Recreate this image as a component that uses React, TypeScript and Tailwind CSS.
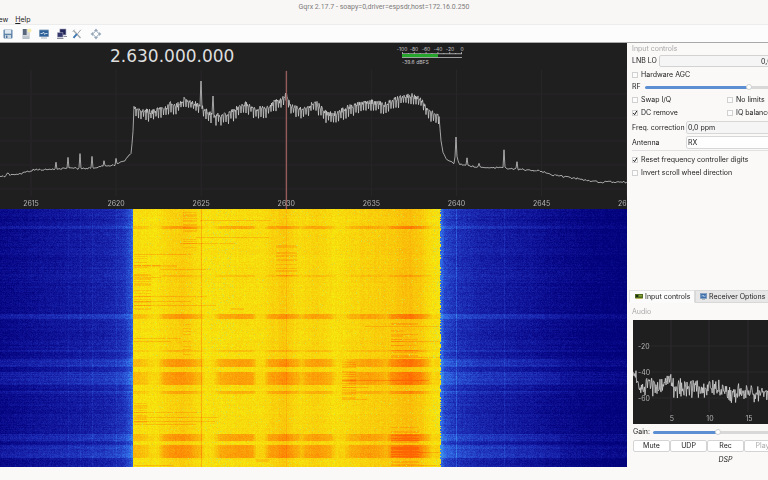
import React, { useEffect, useRef } from "react";

type Point = [number, number];

function makeRandom(seed: number) {
  let s = seed;
  return () => {
    s = (s * 1664525 + 1013904223) % 4294967296;
    return s / 4294967296;
  };
}

function interpolate(points: Point[], x: number) {
  if (x <= points[0][0]) return points[0][1];
  for (let i = 1; i < points.length; i++) {
    if (x <= points[i][0]) {
      const [x0, y0] = points[i - 1];
      const [x1, y1] = points[i];
      return y0 + ((y1 - y0) * (x - x0)) / (x1 - x0 || 1);
    }
  }
  return points[points.length - 1][1];
}

const PLOT_W = 627;
const PLOT_H = 139;
const BAND_START = 133;
const BAND_END = 440;

// Spectrum envelope, in plot units (0 is the top of the plot).
const NOISE_LEFT: Point[] = [
  [0, 107], [6, 106], [7, 103], [10, 105], [20, 104], [33, 100], [43, 99.5], [55, 99.5], [56, 93], [57, 99], [67, 98.5],
  [68, 87], [69, 98], [79, 98.5], [80, 84], [81, 98.5], [91, 98], [92, 87], [93, 98], [103, 96], [104, 91], [105, 96],
  [115, 95], [116, 88], [117, 94], [123, 92], [126, 89], [128, 86], [131, 83], [132, 74], [133, 62], [134, 36],
];
const IN_BAND: Point[] = [
  [134, 37], [142, 39], [152, 40], [160, 38], [165, 37], [171, 32], [177, 34], [184, 27], [190, 30], [198, 33], [200, 33],
  [201, 11], [202, 35], [205, 38], [209, 42], [212, 42], [213, 26], [214, 44], [223, 44], [231, 41], [238, 36], [246, 32],
  [252, 35], [256, 38], [260, 37], [265, 37], [272, 32], [280, 29], [285, 26], [286, 21], [287, 27], [290, 33], [302, 38],
  [316, 31], [327, 42], [336, 42], [347, 36], [358, 32], [372, 30], [384, 33], [395, 28], [405, 24], [413, 24], [422, 29],
  [429, 40], [435, 42], [439, 45],
];
const NOISE_RIGHT: Point[] = [
  [440, 58], [441, 70], [443, 83], [447, 90], [454, 93], [455, 87], [456, 67], [457, 87], [459, 94], [466, 95], [467, 88],
  [468, 96], [478, 97], [479, 94], [480, 97], [497, 98], [503, 98], [504, 80], [505, 98], [516, 99], [517, 92], [518, 99],
  [540, 101], [553, 105], [573, 108], [597, 112], [627, 112],
];

function spectrumPath() {
  const rnd = makeRandom(11);
  const parts: string[] = [];
  const add = (x: number, y: number) => parts.push(x.toFixed(1) + "," + y.toFixed(1));
  for (let x = 0; x <= 134; x += 1) add(x, interpolate(NOISE_LEFT, x) + (rnd() - 0.5) * 1.8);
  let tooth = 0;
  for (let x = 134.5; x < BAND_END - 0.5; x += 0.5) {
    const top = interpolate(IN_BAND, x);
    const deep = tooth % 5 === 3 ? 8 + rnd() * 5 : rnd() * 5;
    const isPeak = Math.abs(x - 201) < 1 || Math.abs(x - 213) < 1;
    add(x, top + (isPeak ? 0 : deep - 1));
    tooth++;
  }
  for (let x = 440; x <= PLOT_W; x += 1) add(x, interpolate(NOISE_RIGHT, x) + (rnd() - 0.5) * 1.9);
  return "M" + parts.join("L");
}

const SPECTRUM = spectrumPath();
const FREQ_TICKS = [2615, 2620, 2625, 2630, 2635, 2640, 2645, 2650];
const tickX = (f: number) => 31 + ((f - 2615) / 5) * 85.1;

function Spectrum() {
  return (
    <div className="relative h-[139px] shrink-0 overflow-hidden">
      <svg className="block h-full w-full" viewBox={`0 0 ${PLOT_W} ${PLOT_H}`} preserveAspectRatio="none" aria-hidden="true">
        {FREQ_TICKS.map((f) => (
          <line key={f} x1={tickX(f)} x2={tickX(f)} y1="0" y2="126" stroke="#282728" />
        ))}
        {[24, 48, 71, 95, 119].map((y) => (
          <line key={y} x1="0" x2={PLOT_W} y1={y} y2={y} stroke="#262526" />
        ))}
        <path d={SPECTRUM} fill="none" stroke="#d2d2d2" strokeWidth="0.75" strokeLinejoin="round" />
        <rect x="285.7" y="1" width="1.4" height="138" fill="#935b59" />
      </svg>
      {FREQ_TICKS.map((f) => (
        <span
          key={f}
          className="absolute bottom-0 w-8 -translate-x-1/2 text-center text-[7px] leading-[11px] text-[#b5b5b5]"
          style={{ left: `${(tickX(f) / PLOT_W) * 100}%` }}
        >
          {f}
        </span>
      ))}
    </div>
  );
}

const HEAT: Point[] = [
  [134, 0.5], [144, 0.4], [150, 0.15], [158, 0.15], [164, 0.7], [176, 0.85], [190, 0.75], [200, 0.45], [205, 0.08], [213, 0.1],
  [220, 0.7], [238, 0.85], [252, 0.8], [256, 0.12], [264, 0.15], [268, 0.65], [285, 0.85], [297, 0.6], [301, 0.35], [306, 0.65],
  [320, 0.75], [330, 0.6], [336, 0.15], [344, 0.15], [350, 0.5], [368, 0.7], [380, 0.5], [386, 0.3], [392, 0.85], [410, 1.1],
  [420, 0.9], [428, 0.5], [432, 0.15], [438, 0.25], [441, 0.1],
];
const GLOW: Point[] = [
  [134, 0.03], [155, 0], [168, 0.1], [182, 0.16], [196, 0.07], [206, 0], [230, 0.03], [250, 0.05], [262, 0.03], [284, 0.19],
  [298, 0.05], [318, 0.11], [334, 0.01], [350, 0.08], [372, 0.14], [390, 0.17], [410, 0.27], [422, 0.16], [428, 0.03], [441, 0],
];
// [first row, last row, strength] of the bursts that cross the whole band
const BURSTS: [number, number, number][] = [
  [17, 19, 0.7], [66, 67, 0.4], [105, 109, 0.75], [150, 157, 0.8], [163, 175, 0.8],
  [182, 184, 0.6], [225, 231, 0.8], [236, 248, 0.85], [141, 142, 0.35],
];
// [x0, x1, y0, y1, density] patches of short streaks
const PATCHES: [number, number, number, number, number][] = [
  [183, 196, 3, 42, 0.5], [276, 296, 36, 66, 0.5], [134, 146, 44, 60, 0.4], [134, 150, 65, 100, 0.4], [134, 176, 56, 57, 0.8],
  [342, 355, 152, 190, 0.55], [391, 417, 112, 148, 0.55], [391, 418, 217, 256, 0.45], [391, 402, 118, 136, 0.4],
  [134, 146, 193, 215, 0.5], [231, 243, 98, 102, 0.7], [256, 268, 249, 252, 0.6], [183, 190, 114, 148, 0.3],
];
// [x0, x1, y] long thin streaks
const STREAKS: [number, number, number][] = [
  [200, 270, 11], [196, 268, 28], [180, 235, 34], [134, 160, 68], [134, 206, 87], [134, 215, 96], [134, 190, 92], [134, 159, 56],
  [134, 180, 129], [134, 170, 132], [134, 200, 203], [134, 217, 208], [134, 216, 212], [134, 195, 215], [342, 367, 178],
  [342, 428, 171], [342, 366, 190], [365, 440, 117], [391, 440, 132], [391, 440, 148], [134, 172, 256], [391, 440, 243],
  [391, 440, 256], [134, 190, 45], [160, 210, 60],
];

function Waterfall() {
  const ref = useRef<HTMLCanvasElement>(null);
  useEffect(() => {
    const canvas = ref.current;
    const ctx = canvas?.getContext("2d");
    if (!canvas || !ctx) return;
    const w = canvas.width;
    const h = canvas.height;
    const image = ctx.createImageData(w, h);
    const rnd = makeRandom(77);
    const columnJitter = Array.from({ length: w }, () => (rnd() - 0.5) * 0.05);
    for (let y = 0; y < h; y++) {
      let burst = 0;
      BURSTS.forEach(([a, b, s]) => {
        if (y >= a && y <= b) burst = Math.max(burst, s);
      });
      const rowNoise = (rnd() - 0.5) * 0.1;
      const patchOn = PATCHES.map((p) => y >= p[2] && y <= p[3] && rnd() < p[4]);
      const lines = STREAKS.filter((s) => s[2] === y);
      for (let x = 0; x < w; x++) {
        const noise = rnd() + rnd() - 1;
        let r: number;
        let g: number;
        let b: number;
        if (x >= BAND_START && x < BAND_END + (rnd() > 0.5 ? 1 : 0)) {
          let v = 0.08 + interpolate(GLOW, x) + rowNoise * 0.5 + noise * 0.11 + columnJitter[x];
          v += burst * interpolate(HEAT, x) * 0.66;
          patchOn.forEach((on, i) => {
            if (on && x >= PATCHES[i][0] && x <= PATCHES[i][1]) v += 0.19;
          });
          if (lines.some((s) => x >= s[0] && x <= s[1])) v += 0.25;
          if (x === 201) v += 0.3;
          if (x === 286) v += 0.12;
          v = Math.max(0, Math.min(1, v));
          r = 246 + v * 9;
          g = 236 - v * 136;
          b = 14 - v * 12;
          const pale = x > 203 && x < 235 ? 0.06 : x > 432 ? 0.14 : 0.012;
          if (burst === 0 && rnd() < pale) {
            r = 215;
            g = 224;
            b = 60;
          }
        } else {
          let v: number;
          if (x < BAND_START) {
            v = interpolate([[0, 0.12], [40, 0.24], [80, 0.34], [110, 0.44], [124, 0.58], [130, 0.8], [133, 1.05]], x);
          } else {
            v = interpolate([[441, 1], [444, 0.75], [455, 0.56], [480, 0.42], [520, 0.3], [560, 0.15], [590, 0.05], [627, 0]], x);
          }
          v += noise * 0.16 + rowNoise * 1.2 + columnJitter[x];
          v += burst * (x < 560 ? 0.28 : 0.18);
          if (x === 456) v += 0.28;
          if (x === 504) v += 0.14;
          if (x === 80 || x === 92 || x === 68 || x === 116) v += 0.09;
          v = Math.max(0, Math.min(1.2, v));
          r = 2 + v * 48;
          g = 2 + v * v * 60 + v * 48;
          b = 122 + Math.min(1, v) * 108;
        }
        const i = (y * w + x) * 4;
        image.data[i] = r;
        image.data[i + 1] = g;
        image.data[i + 2] = b;
        image.data[i + 3] = 255;
      }
    }
    ctx.putImageData(image, 0, 0);
  }, []);
  return (
    <div className="min-h-0 flex-1">
      <canvas ref={ref} width={627} height={258} className="block h-full w-full" aria-label="Waterfall" />
    </div>
  );
}

function SignalMeter() {
  return (
    <div className="flex w-[68px] flex-col text-[5px] leading-[5px] text-[#c4c4c4]">
      <div className="-mx-[2px] flex justify-between">
        {["-100", "-80", "-60", "-40", "-20", "0"].map((t) => (
          <span key={t} className="w-3 text-center">{t}</span>
        ))}
      </div>
      <div className="px-1">
        <svg className="block h-[6px] w-full" viewBox="0 0 60 6" preserveAspectRatio="none" aria-hidden="true">
          {Array.from({ length: 11 }, (_, i) => (
            <rect key={i} x={i * 5.93} y={i % 2 ? 1 : 0} width="0.7" height={i % 2 ? 1 : 2} fill="#c8c8c8" />
          ))}
          <rect x="0" y="1.4" width="60" height="0.8" fill="#c8c8c8" />
          <rect x="0" y="2" width="36" height="3.4" fill="#25a52b" />
          <rect x="0" y="5.2" width="60" height="0.8" fill="#bdbdbd" />
        </svg>
      </div>
      <span className="mt-[2px] px-1">-39.6 dBFS</span>
    </div>
  );
}

function ToolButton({ label, children }: { label: string; children: React.ReactNode }) {
  return (
    <button type="button" aria-label={label} className="flex size-[12px] items-center justify-center">
      <svg className="size-[12px]" viewBox="0 0 12 12" aria-hidden="true">{children}</svg>
    </button>
  );
}

function Toolbar() {
  return (
    <div className="flex h-[19px] shrink-0 items-center border-t border-b border-t-[#ececec] border-b-[#a9a9a9] bg-[#fdfcfd] pl-[2px]">
      <ToolButton label="Save">
        <rect x="1.5" y="1.5" width="9" height="9" rx="1" fill="#5d82a8" />
        <rect x="2.8" y="1.5" width="6.4" height="4.2" fill="#dfe8f0" />
        <rect x="3" y="7" width="6" height="3.5" fill="#c9d5df" />
        <rect x="4" y="7.6" width="1.4" height="2.4" fill="#4a6f96" />
      </ToolButton>
      <span className="w-[6px]" />
      <ToolButton label="Bookmarks">
        <rect x="2" y="1" width="8" height="10" fill="#d4d8dc" />
        <rect x="3" y="1" width="3.6" height="6" fill="#58677c" />
        <path d="M3 9h6M3 10.3h6" stroke="#9fabb8" strokeWidth=".7" />
        <circle cx="9.5" cy="2.5" r="2" fill="#f4ecaa" />
      </ToolButton>
      <span className="w-[6px]" />
      <ToolButton label="Receiver">
        <rect x="1" y="1.5" width="10" height="7.6" rx=".8" fill="#8fa9c4" />
        <rect x="1.8" y="2.3" width="8.4" height="6" fill="#2e6298" />
        <path d="M2.5 5.5h2l1-1.5 1.2 2.5.8-1h2" fill="none" stroke="#e3eef8" strokeWidth=".8" />
        <rect x="3" y="9.5" width="6" height="1" fill="#a8b2bc" />
      </ToolButton>
      <span className="w-[6px]" />
      <ToolButton label="Remote control">
        <rect x="3.6" y="0.8" width="6.6" height="6.4" fill="#8186a3" />
        <rect x="4.2" y="1.4" width="5.3" height="5" fill="#24265a" />
        <rect x="1.2" y="4.3" width="6" height="5.2" fill="#9a9eb4" />
        <rect x="1.8" y="4.9" width="4.8" height="3.9" fill="#34376b" />
        <path d="M1 10.5h6.5M7.5 8.5h3.5" stroke="#8d8f9c" />
      </ToolButton>
      <span className="w-[3px]" />
      <ToolButton label="Settings">
        <path d="M2.5 2.5l7 7.5" stroke="#9aa3ab" strokeWidth="1.2" />
        <path d="M9.8 1.8L6.5 5.8" stroke="#99a1a9" strokeWidth="1" />
        <path d="M5.8 6.2L2.5 9.8" stroke="#3c77b0" strokeWidth="1.9" />
        <path d="M1.6 3.6l2-2" stroke="#a9b0b6" strokeWidth="1" />
      </ToolButton>
      <span className="w-[7px]" />
      <ToolButton label="Full screen">
        <path d="M6 0.6l2.2 2.7H3.8zM6 11.4l2.2-2.7H3.8zM0.6 6l2.7-2.2v4.4zM11.4 6L8.7 3.8v4.4z" fill="#94a5b6" />
        <path d="M6 2.8L9.2 6 6 9.2 2.8 6z" fill="#fff" stroke="#8fa1b3" strokeWidth=".8" />
      </ToolButton>
    </div>
  );
}

function Check({ label, checked = false }: { label: string; checked?: boolean }) {
  return (
    <label className="flex h-[13px] items-center gap-[3px] whitespace-nowrap">
      <span className="relative flex size-[6px]">
        <input type="checkbox" defaultChecked={checked} className="peer size-[6px] appearance-none border border-[#d2d1d1] bg-[#fcfcfc]" />
        <svg className="pointer-events-none absolute inset-0 hidden size-[6px] peer-checked:block" viewBox="0 0 6 6" aria-hidden="true">
          <path d="M1.2 3l1.4 1.7L4.8 1" fill="none" stroke="#222" strokeWidth="1" />
        </svg>
      </span>
      {label}
    </label>
  );
}

const THUMB =
  "[&::-webkit-slider-thumb]:size-[6px] [&::-webkit-slider-thumb]:appearance-none [&::-webkit-slider-thumb]:rounded-full [&::-webkit-slider-thumb]:border [&::-webkit-slider-thumb]:border-[#cfcfcf] [&::-webkit-slider-thumb]:bg-white";

function InputControls() {
  return (
    <section className="flex flex-col pl-[5px]">
      <h2 className="h-[11px] text-[7px] leading-[11px] text-[#a9a7a7]">Input controls</h2>
      <div className="flex h-[14px] items-center gap-[2px]">
        <label htmlFor="lnb">LNB LO</label>
        <input id="lnb" defaultValue="0,000000 MHz" className="h-[12px] min-w-0 flex-1 rounded-[2px] border border-[#d3d2d2] bg-[#f6f5f5] pr-[5px] text-right" />
      </div>
      <Check label="Hardware AGC" />
      <div className="flex h-[12px] items-center gap-[4px]">
        <label htmlFor="rf">RF</label>
        <input
          id="rf"
          type="range"
          defaultValue={61}
          className={"h-[3px] min-w-0 flex-1 appearance-none rounded-full bg-[linear-gradient(to_right,#5c8fd1_61%,#d9d8d8_61%)] " + THUMB}
        />
      </div>
      <div className="grid grid-cols-[95px_1fr]">
        <Check label="Swap I/Q" />
        <Check label="No limits" />
        <Check label="DC remove" checked />
        <Check label="IQ balance" />
      </div>
      <div className="grid grid-cols-[54px_1fr] items-center gap-y-[2px] pt-[2px]">
        <label htmlFor="ppm">Freq. correction</label>
        <input id="ppm" defaultValue="0,0 ppm" className="h-[13px] min-w-0 rounded-[2px] border border-[#d8d7d7] bg-[#f6f5f5] px-[1px]" />
        <label htmlFor="antenna">Antenna</label>
        <select id="antenna" className="h-[13px] min-w-0 appearance-none rounded-[2px] border border-[#d8d7d7] bg-[#fefefe] px-[1px]">
          <option>RX</option>
        </select>
      </div>
      <hr className="mt-[1px] mb-[2px] border-[#e2e1e1]" />
      <Check label="Reset frequency controller digits" checked />
      <Check label="Invert scroll wheel direction" />
    </section>
  );
}

const AUDIO_TREND: Point[] = [[0, 52], [3, 60], [8, 68], [12, 70], [16, 65], [30, 68], [36, 60], [42, 70], [60, 67], [75, 70], [80, 68], [100, 72], [135, 74], [170, 76]];

function audioPath() {
  const rnd = makeRandom(5);
  let d = "";
  for (let x = 0; x <= 170; x += 0.6) {
    const y = interpolate(AUDIO_TREND, x) + (rnd() + rnd() - 1) * 12;
    d += (d ? "L" : "M") + x.toFixed(1) + "," + y.toFixed(1);
  }
  return d;
}

const AUDIO = audioPath();

function AudioPlot() {
  return (
    <svg className="block h-[104px] w-[170px] bg-[#201f20]" viewBox="0 0 170 104" role="img" aria-label="Audio spectrum">
      {[38, 76, 115, 153].map((x) => (
        <line key={x} x1={x} x2={x} y1="0" y2="92" stroke="#2c2b2c" />
      ))}
      {[26, 52, 78].map((y) => (
        <line key={y} x1="18" x2="170" y1={y} y2={y} stroke="#2b2a2b" />
      ))}
      <g fill="#b5b5b5" fontSize="7">
        <text x="5" y="29">-20</text>
        <text x="5" y="55">-40</text>
        <text x="5" y="81">-60</text>
        <text x="39" y="101" textAnchor="middle">5</text>
        <text x="77" y="101" textAnchor="middle">10</text>
        <text x="116" y="101" textAnchor="middle">15</text>
      </g>
      <path d={AUDIO} fill="none" stroke="#dadada" strokeWidth="0.75" />
    </svg>
  );
}

function AudioPanel() {
  return (
    <section className="flex flex-col pl-[6px]">
      <h2 className="-ml-px h-[17px] text-[7px] leading-[17px] text-[#a9a7a7]">Audio</h2>
      <AudioPlot />
      <div className="flex h-[16px] items-center gap-[3px]">
        <label htmlFor="gain">Gain:</label>
        <input
          id="gain"
          type="range"
          defaultValue={50}
          className={"h-[3px] w-[130px] appearance-none rounded-full bg-[linear-gradient(to_right,#5c8fd1_50%,#d9d8d8_50%)] " + THUMB}
        />
      </div>
      <div className="flex">
        {["Mute", "UDP", "Rec", "Play"].map((t) => (
          <button
            key={t}
            type="button"
            disabled={t === "Play"}
            className="h-[12px] w-[37px] rounded-[2px] border border-[#d5d4d4] bg-white leading-[10px] disabled:text-[#aaa]"
          >
            {t}
          </button>
        ))}
      </div>
      <p className="w-[185px] text-center leading-[15px] italic">DSP</p>
    </section>
  );
}

function DockTabs() {
  return (
    <div role="tablist" className="ml-[2px] flex h-[13px]">
      <button type="button" role="tab" aria-selected="true" className="flex w-[66px] shrink-0 items-center gap-[2px] border border-t-[#e4e3e3] border-r-[#dcdbdb] border-b-transparent border-l-[#e4e3e3] bg-[#fcfbfb] pl-[5px] whitespace-nowrap">
        <svg className="h-[5px] w-[8px] shrink-0" viewBox="0 0 8 5" aria-hidden="true">
          <rect width="8" height="4.4" fill="#4c6c1f" />
          <rect x="1" y="1" width="2" height="2" fill="#202a12" />
          <rect x="4" y="1" width="3" height="1.5" fill="#8a9f38" />
          <path d="M1 4.6h6" stroke="#c2ab3f" strokeWidth=".8" />
        </svg>
        Input controls
      </button>
      <button type="button" role="tab" aria-selected="false" className="flex w-[90px] shrink-0 items-center gap-[2px] border border-[#d9d8d8] bg-[#e8e7e7] pl-[4px] whitespace-nowrap">
        <svg className="size-[7px] shrink-0" viewBox="0 0 7 7" aria-hidden="true">
          <rect x=".3" y=".6" width="6.4" height="4.8" fill="#3f70ab" stroke="#7897ba" strokeWidth=".6" />
          <path d="M1.3 3h1.2l.7-1 .8 1.8.6-.8h1.2" fill="none" stroke="#dce8f5" strokeWidth=".6" />
          <path d="M2 6.3h3" stroke="#8d99a6" strokeWidth=".7" />
        </svg>
        Receiver Options
      </button>
    </div>
  );
}

export default function App() {
  return (
    <div className="flex h-screen flex-col overflow-hidden bg-[#faf9f8] font-['Inter','Liberation_Sans',sans-serif] text-[7px] leading-[10px] text-[#222121]">
      <header className="shrink-0 bg-[#f9f7f6]">
        <h1 className="h-[14px] text-center font-['Roboto','Liberation_Sans',sans-serif] text-[7px] leading-[14px] font-normal text-[#7d7b7a]">
          Gqrx 2.17.7 - soapy=0,driver=espsdr,host=172.16.0.250
        </h1>
        <nav className="flex h-[10px] gap-[7px]">
          <button type="button" className="-ml-[8px] leading-[11px]">View</button>
          <button type="button" className="leading-[11px]"><span className="underline">H</span>elp</button>
        </nav>
      </header>
      <Toolbar />
      <div className="flex min-h-0 flex-1">
        <main className="flex min-w-0 flex-1 flex-col bg-[#201f20]">
          <div className="flex h-[27px] shrink-0 items-start">
            <output className="w-[288px] pt-[3px] pl-[110px] font-['DejaVu_Sans',sans-serif] text-[17px] leading-[20px] text-[#dedede]">2.630.000.000</output>
            <div className="pt-[4px] pl-[110px]">
              <SignalMeter />
            </div>
          </div>
          <Spectrum />
          <Waterfall />
          <div className="h-[13px] shrink-0 bg-[#faf9f8]" />
        </main>
        <aside className="w-[141px] shrink-0 overflow-hidden">
          <div className="flex h-full w-[190px] flex-col">
            <InputControls />
            <div className="flex-1" />
            <DockTabs />
            <AudioPanel />
            <div className="h-[13px] shrink-0" />
          </div>
        </aside>
      </div>
    </div>
  );
}
